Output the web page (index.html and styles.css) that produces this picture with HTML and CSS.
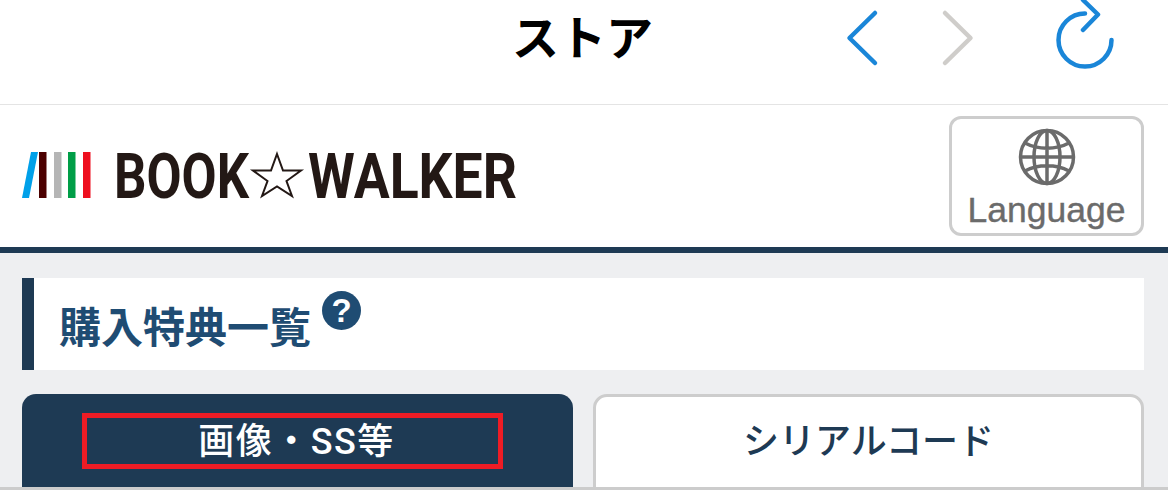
FILE: index.html
```html
<!DOCTYPE html>
<html lang="ja">
<head>
<meta charset="utf-8">
<title>ストア</title>
<link rel="stylesheet" href="styles.css">
</head>
<body>
<div class="topbar">
  <h1 class="store-title">ストア</h1>
  <div class="nav-icons">
    <svg class="nav-icon" width="30" height="56" viewBox="0 0 30 56"><path d="M27 3 1.500 28 27 53" class="stroke-blue"/></svg>
    <svg class="nav-icon" width="30" height="56" viewBox="0 0 30 56"><path d="M3 3 28.500 28 3 53" class="stroke-gray"/></svg>
    <svg class="nav-icon reload" width="60" height="70" viewBox="0 0 60 70"><path d="M56.500 39A26.500 26.500 0 1 1 30 12.500M28 -1 43 13.500 28 29" class="stroke-blue"/></svg>
  </div>
</div>
<header class="site-header">
  <div class="logo">
    <svg class="logo-mark" width="69" height="46" viewBox="0 0 69 46">
      <path d="M9 0h7L7 46H0z" fill="#00a0e9"/>
      <rect x="17" width="7.500" height="46" fill="#4c0000"/>
      <rect x="32" width="7.500" height="46" fill="#b5b5b5"/>
      <rect x="46" width="7.500" height="46" fill="#009e47"/>
      <rect x="61" width="7.500" height="46" fill="#ee0f1f"/>
    </svg>
    <svg class="logo-type" width="404" height="46" viewBox="0 0 404 46">
      <text class="logo-word" x="0" y="45.500" textLength="135" lengthAdjust="spacingAndGlyphs">BOOK</text>
      <path d="M163 2 169 18.500H187L172.500 29 178 44 163 34.500 148 44 153.500 29 139 18.500H157z" fill="none" stroke="#231815" stroke-width="2"/>
      <text class="logo-word" x="194" y="45.500" textLength="209" lengthAdjust="spacingAndGlyphs">WALKER</text>
    </svg>
  </div>
  <button class="lang-btn" type="button">
    <svg class="globe" width="58" height="58" viewBox="0 0 58 58" fill="none" stroke="#6b6b6b" stroke-width="3.500">
      <circle cx="29" cy="29" r="26.500"/>
      <ellipse cx="29" cy="29" rx="13" ry="26.500"/>
      <path d="M29 2.500V55.500M2.500 29H55.500M7 15C20 22 38 22 51 15M7 43C20 36 38 36 51 43"/>
    </svg>
    <span class="lang-label">Language</span>
  </button>
</header>
<main class="content">
  <section class="panel-title">
    <h2 class="heading">購入特典一覧</h2>
    <svg class="help" width="39" height="39" viewBox="0 0 39 39"><circle cx="19.500" cy="19.500" r="19.500" fill="#1f4c73"/><text x="19.500" y="30.500" text-anchor="middle" class="help-mark">?</text></svg>
  </section>
  <nav class="tabs">
    <div class="tab tab-active"><span class="tab-label-box">画像・SS等</span></div>
    <div class="tab tab-idle">シリアルコード</div>
  </nav>
</main>
</body>
</html>
```
FILE: styles.css
```css
* { box-sizing: border-box; }
html, body { margin: 0; padding: 0; background: #fff; }
body { font-family: "Noto Sans CJK JP", "Liberation Sans", sans-serif; width: 1168px; height: 502px; overflow: hidden; }

.topbar { height: 105px; border-bottom: 1px solid #e4e4e4; display: flex; align-items: flex-start; padding-left: 512px; }
.store-title { margin: 5px 0 0; font-size: 47px; line-height: 60px; font-weight: 700; color: #000; }
.nav-icons { display: flex; align-items: flex-start; margin-left: auto; padding-right: 53px; }
.nav-icon { display: block; margin-top: 10px; overflow: visible; }
.nav-icon:nth-child(2) { margin-left: 64px; }
.nav-icon.reload { margin-top: 1px; margin-left: 83px; }
.stroke-blue, .stroke-gray { fill: none; stroke-width: 4.500; stroke-linecap: round; stroke-linejoin: round; }
.stroke-blue { stroke: #1a86d8; }
.stroke-gray { stroke: #cfcdca; }

.site-header { height: 148px; border-bottom: 6px solid #1e3a54; display: flex; align-items: flex-start; justify-content: space-between; padding: 11px 24px 0 22px; }
.logo { display: flex; align-items: center; gap: 23px; margin-top: 36px; height: 46px; }
.logo-mark, .logo-type { display: block; overflow: visible; }
.logo-word { font-family: Roboto, "Liberation Sans", sans-serif; font-weight: 700; font-size: 63px; fill: #231815; }

.lang-btn { width: 195px; height: 120px; border: 3px solid #cdcdcd; border-radius: 12px; background: #fff; padding: 9px 0 0; display: flex; flex-direction: column; align-items: center; }
.globe { display: block; }
.lang-label { font-family: "Liberation Sans", sans-serif; font-size: 35.500px; line-height: 44px; margin-top: 2px; color: #6b6b6b; -webkit-text-stroke: 0.4px #6b6b6b; }

.content { height: 237px; background: #eeeff1; border-bottom: 3px solid #ccc; padding: 25px 24px 0 22px; overflow: hidden; }
.panel-title { height: 92px; background: #fff; border-left: 12px solid #1e3a54; padding-left: 26px; display: flex; align-items: flex-start; }
.heading { margin: 19px 0 0 -1px; font-size: 42px; line-height: 56px; font-weight: 700; color: #1f4c73; }
.help { display: block; margin: 13px 0 0 11px; }
.help-mark { font-family: "Liberation Sans", sans-serif; font-size: 33px; font-weight: 700; fill: #fff; }

.tabs { display: grid; grid-template-columns: 551px 551px; gap: 20px; margin-top: 24px; }
.tab { height: 120px; border-radius: 14px; display: flex; justify-content: center; align-items: flex-start; font-family: Roboto, "Noto Sans CJK JP", sans-serif; font-size: 36px; font-weight: 500; }
.tab-active { background: #1e3a54; color: #fff; padding-top: 19px; }
.tab-label-box { display: block; width: 421px; height: 56px; margin-right: 11px; border: 5px solid #ee1c25; text-align: center; line-height: 48px; padding-left: 9px; letter-spacing: 1.500px; }
.tab-idle { background: #fff; border: 3px solid #cdcdcd; color: #1e3a54; padding-top: 22px; line-height: 46px; }
```
